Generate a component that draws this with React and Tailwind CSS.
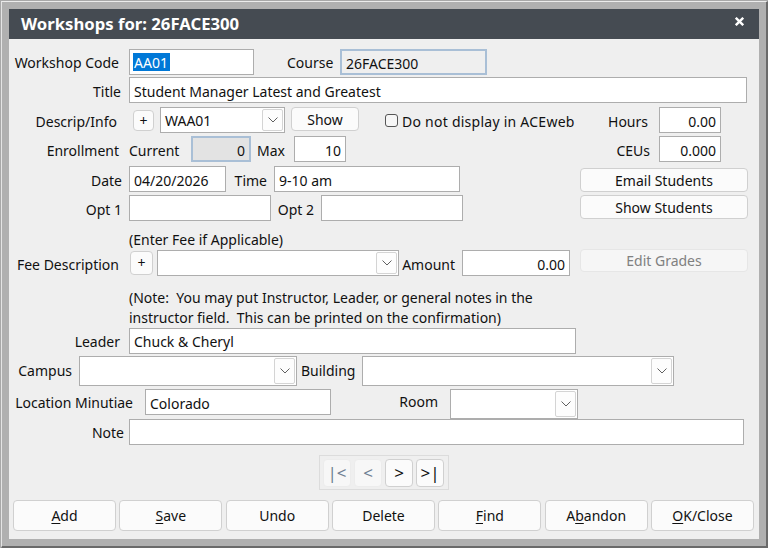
function Field({ className = "", children, right }) {
  return (
    <div className={`h-[26px] shrink-0 border border-[#adadad] bg-white px-[4px] pt-[3px] flex items-center whitespace-nowrap leading-none ${right ? "justify-end" : ""} ${className}`}>
      {children}
    </div>
  );
}
function Chevron() {
  return (
    <svg width="10" height="6" viewBox="0 0 10 6" fill="none" stroke="#606060" strokeWidth="1">
      <path d="M0.5 0.5 L5 5 L9.5 0.5" />
    </svg>
  );
}
function Select({ className = "", children, btn = "h-[22px]" }) {
  return (
    <div className={`shrink-0 border border-[#adadad] bg-white pl-[4px] pr-[1px] flex items-center justify-between whitespace-nowrap ${className}`}>
      <span className="pt-[2px]">{children}</span>
      <span className={`w-[21px] ${btn} border border-[#d4d4d4] rounded-[2px] bg-[#fdfdfd] flex items-center justify-center`}>
        <Chevron />
      </span>
    </div>
  );
}
function Btn({ className = "", children }) {
  return (
    <div className={`shrink-0 border border-[#d0d0d0] rounded-[4px] bg-[#fbfbfb] flex items-center justify-center whitespace-nowrap ${className}`}>
      {children}
    </div>
  );
}
function Label({ className = "", children }) {
  return <div className={`shrink-0 whitespace-nowrap text-right pt-[3px] ${className}`}>{children}</div>;
}
function Row({ className = "", children }) {
  return <div className={`flex items-center shrink-0 ${className}`}>{children}</div>;
}
function U({ children }) {
  return <span className="underline underline-offset-[2px]">{children}</span>;
}

export default function App() {
  return (
    <div className="w-[768px] h-[548px] border-t border-l border-t-[#a8a8a8] border-l-[#a8a8a8] box-border flex overflow-hidden">
      <div className="flex-1 bg-[#b0b0b0] border-t border-l border-t-[#ececec] border-l-[#e4e4e4] border-r-2 border-b-2 border-r-[#6a6a6a] border-b-[#6a6a6a] pt-[7px] pl-[7px] box-border">
        <div className="w-[750px] h-[530px] bg-[#efefef] flex flex-col text-[14px] text-[#111] font-['Noto_Sans',sans-serif] leading-[20px]">
          <div className="h-[30px] shrink-0 bg-[#454b52] flex items-center justify-between pl-[12px] pr-[15px] text-white">
            <span className="font-bold text-[16.7px]">Workshops for: 26FACE300</span>
            <svg className="mb-[6px]" width="9" height="9" viewBox="0 0 9 9" stroke="white" strokeWidth="2.4"><path d="M0.8 0.8 L8.2 8.2 M8.2 0.8 L0.8 8.2" /></svg>
          </div>

          <Row className="mt-[10px] h-[26px]">
            <Label className="w-[110px] !pt-[1px]">Workshop Code</Label>
            <Field className="ml-[10px] w-[125px] !px-[3px] !pt-0"><span className="bg-[#0078d7] text-white h-[18px] leading-[20px] px-[1px] w-[37px]">AA01</span></Field>
            <Label className="ml-[33px] w-[45px] !pt-[1px]">Course</Label>
            <Field className="ml-[8px] w-[147px] !bg-[#efefef] border-2 !border-[#a9bfd6]">26FACE300</Field>
          </Row>

          <Row className="mt-[2px] h-[26px]">
            <Label className="w-[112px]">Title</Label>
            <Field className="ml-[8px] w-[618px]">Student Manager Latest and Greatest</Field>
          </Row>

          <Row className="mt-[4px] h-[26px]">
            <Label className="w-[108px]">Descrip/Info</Label>
            <Btn className="ml-[16px] w-[21px] h-[21px] pt-[1px]">+</Btn>
            <Select className="ml-[6px] w-[125px] h-[26px]">WAA01</Select>
            <Btn className="ml-[6px] w-[68px] h-[24px] -mt-[2px] pt-[2px]">Show</Btn>
            <div className="ml-[26px] w-[13px] h-[13px] border border-[#555] rounded-[3px] bg-[#f6f6f6] shrink-0" />
            <Label className="ml-[4px] w-[173px] !text-left tracking-[0.25px]">Do not display in ACEweb</Label>
            <Label className="ml-[32px] w-[41px]">Hours</Label>
            <Field right className="ml-[11px] w-[62px]">0.00</Field>
          </Row>

          <Row className="mt-[3px] h-[26px]">
            <Label className="w-[110px]">Enrollment</Label>
            <Label className="ml-[10px] w-[50px] !text-left">Current</Label>
            <Field right className="ml-[12px] w-[60px] !bg-[#e3e3e3] border-2 !border-[#a9bfd6]">0</Field>
            <Label className="ml-[6px] w-[30px] !text-left">Max</Label>
            <Field right className="ml-[7px] w-[52px]">10</Field>
            <Label className="ml-[270px] w-[34px]">CEUs</Label>
            <Field right className="ml-[9px] w-[62px]">0.000</Field>
          </Row>

          <Row className="mt-[4px] h-[26px]">
            <Label className="w-[113px]">Date</Label>
            <Field className="ml-[7px] w-[97px]">04/20/2026</Field>
            <Label className="ml-[8px] w-[33px]">Time</Label>
            <Field className="ml-[7px] w-[186px]">9-10 am</Field>
            <Btn className="ml-[120px] w-[168px] h-[24px] mt-[2px] pt-[2px]">Email Students</Btn>
          </Row>

          <Row className="mt-[3px] h-[26px]">
            <Label className="w-[113px]">Opt 1</Label>
            <Field className="ml-[7px] w-[142px]" />
            <Label className="ml-[6px] w-[37px]">Opt 2</Label>
            <Field className="ml-[7px] w-[142px]" />
            <Btn className="ml-[117px] w-[168px] h-[24px] -mt-[2px] pt-[2px]">Show Students</Btn>
          </Row>

          <div className="mt-[9px] ml-[120px] h-[20px] leading-[19px] whitespace-nowrap shrink-0">(Enter Fee if Applicable)</div>

          <Row className="h-[26px]">
            <Label className="w-[110px]">Fee Description</Label>
            <Btn className="ml-[11px] w-[23px] h-[24px]">+</Btn>
            <Select className="ml-[4px] w-[242px] h-[26px]"></Select>
            <Label className="ml-[2px] w-[54px]">Amount</Label>
            <Field right className="ml-[7px] w-[108px]">0.00</Field>
            <div className="ml-[10px] w-[168px] h-[23px] -mt-[6px] pt-[1px] shrink-0 border border-[#e6e6e6] rounded-[4px] bg-[#f6f6f6] text-[#808080] flex items-center justify-center">Edit Grades</div>
          </Row>

          <div className="mt-[12px] ml-[120px] h-[40px] leading-[20px] shrink-0 whitespace-nowrap">
            <div>(Note:&nbsp; You may put Instructor, Leader, or general notes in the</div>
            <div>instructor field.&nbsp; This can be printed on the confirmation)</div>
          </div>

          <Row className="h-[26px]">
            <Label className="w-[111px] !pt-[1px]">Leader</Label>
            <Field className="ml-[9px] w-[447px] !pt-[1px]">Chuck &amp; Cheryl</Field>
          </Row>

          <Row className="mt-[2px] h-[30px]">
            <Label className="w-[63px] !pt-0">Campus</Label>
            <Select className="ml-[7px] w-[218px] h-[30px]" btn="h-[26px]"></Select>
            <Label className="ml-[4px] w-[54px] !pt-0">Building</Label>
            <Select className="ml-[7px] w-[312px] h-[30px]" btn="h-[26px]"></Select>
          </Row>

          <Row className="mt-[3px] h-[30px] items-start">
            <Label className="w-[124px] h-[26px] leading-[26px] !pt-[1px]">Location Minutiae</Label>
            <Field className="ml-[12px] w-[186px]">Colorado</Field>
            <Label className="ml-[68px] w-[39px] h-[26px] leading-[26px] !pt-0">Room</Label>
            <Select className="ml-[12px] w-[128px] h-[30px]" btn="h-[26px]"></Select>
          </Row>

          <Row className="h-[26px]">
            <Label className="w-[115px] !pt-[1px]">Note</Label>
            <Field className="ml-[5px] w-[615px]" />
          </Row>

          <div className="mt-[10px] ml-[310px] w-[130px] h-[35px] shrink-0 border border-[#dcdcdc] flex items-center pl-[3px] gap-[3px] text-[17px]">
            <div className="w-[28px] h-[28px] shrink-0 rounded-[4px] bg-[#f7f7f7] border border-[#ececec] text-[#6e8093] flex items-center justify-center">|&lt;</div>
            <div className="w-[28px] h-[28px] shrink-0 rounded-[4px] bg-[#f7f7f7] border border-[#ececec] text-[#6e8093] flex items-center justify-center">&lt;</div>
            <Btn className="w-[28px] h-[28px]">&gt;</Btn>
            <Btn className="w-[28px] h-[28px]">&gt;|</Btn>
          </div>

          <div className="mt-[10px] ml-[4px] flex gap-[3.33px] shrink-0">
            <Btn className="w-[103px] h-[31px]"><U>A</U>dd</Btn>
            <Btn className="w-[103px] h-[31px]"><U>S</U>ave</Btn>
            <Btn className="w-[103px] h-[31px]">Undo</Btn>
            <Btn className="w-[103px] h-[31px]">Delete</Btn>
            <Btn className="w-[103px] h-[31px]"><U>F</U>ind</Btn>
            <Btn className="w-[103px] h-[31px]">A<U>b</U>andon</Btn>
            <Btn className="w-[103px] h-[31px]"><U>O</U>K/Close</Btn>
          </div>
        </div>
      </div>
    </div>
  );
}
